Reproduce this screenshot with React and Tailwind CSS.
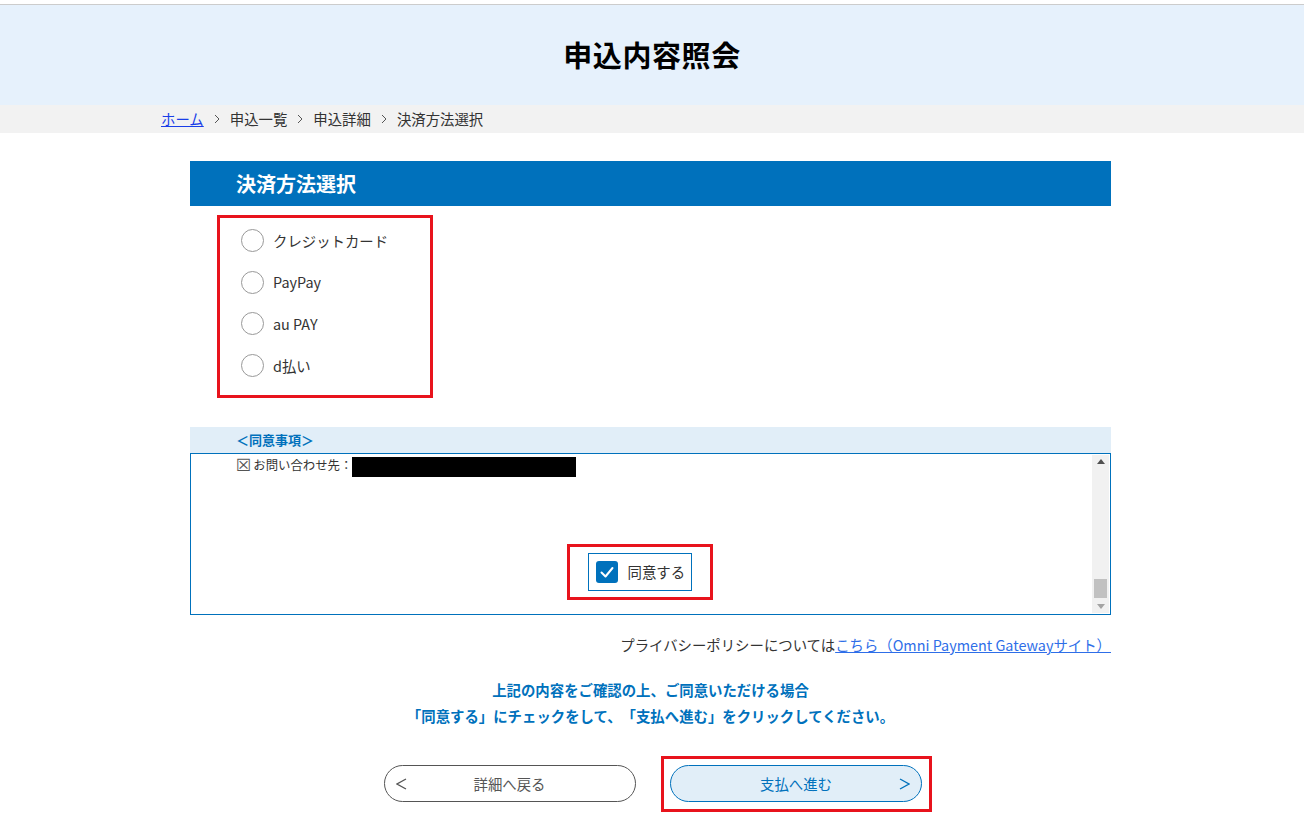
import React, { useState } from 'react';

const FONT = { fontFamily: '"Noto Sans CJK JP", "Noto Sans", sans-serif' };

const methods = ['クレジットカード', 'PayPay', 'au PAY', 'd払い'];

const Chevron = () => (
  <svg width="6" height="10" viewBox="0 0 6 10">
    <path d="M1 1 L5 5 L1 9" stroke="#555" strokeWidth="1" fill="none" />
  </svg>
);

const App = () => {
  const [method, setMethod] = useState(null);
  const [agreed, setAgreed] = useState(true);

  return (
    <div className="min-h-[816px] bg-white pt-1 text-[#333] [text-spacing-trim:space-all]" style={FONT}>
      {/* Page title */}
      <div className="border-t border-[#cccccc] bg-[#e6f1fc] h-[101px] flex items-center justify-center">
        <h1 className="text-[29px] font-bold text-black tracking-[0.02em]">申込内容照会</h1>
      </div>

      {/* Breadcrumb */}
      <div className="bg-[#f2f2f2] h-[28px]">
        <div className="w-[982px] mx-auto flex items-center h-full text-[14.4px] text-[#333] gap-[10px]">
          <a href="#" className="text-[#1a3ee8] underline">ホーム</a>
          <Chevron />
          <span>申込一覧</span>
          <Chevron />
          <span>申込詳細</span>
          <Chevron />
          <span>決済方法選択</span>
        </div>
      </div>

      <div className="w-[921px] ml-[190px] pt-[28px]">
        {/* Section header */}
        <div className="bg-[#0071bc] h-[45px] flex items-center pl-[46px]">
          <h2 className="text-white text-[20px] font-bold">決済方法選択</h2>
        </div>

        {/* Payment methods */}
        <div className="pt-[9px] pl-[27px]">
          <div className="w-[216px] h-[183px] border-[3px] border-[#e8131c] pl-[21px] pt-[11px] flex flex-col gap-[18.7px]">
            {methods.map(m => (
              <label key={m} className="flex items-center gap-[9px] cursor-pointer h-[23px]">
                <span
                  onClick={() => setMethod(m)}
                  className="w-[23px] h-[23px] rounded-full border border-[#999] bg-white flex items-center justify-center"
                >
                  {method === m && <span className="w-[11px] h-[11px] rounded-full bg-[#0071bc]" />}
                </span>
                <span className="text-[14.4px] text-[#333]">{m}</span>
              </label>
            ))}
          </div>
        </div>

        {/* Consent */}
        <div className="mt-[29px]">
          <div className="bg-[#e1eef8] h-[26px] flex items-center pl-[46px]">
            <span className="text-[13px] font-bold text-[#0071bc]">＜同意事項＞</span>
          </div>
          <div className="border border-[#0071bc] h-[162px] flex">
            <div className="flex-1 flex flex-col">
              <div className="pl-[45px] pt-[3px] flex items-start text-[12.4px] text-[#333] leading-[20px]">
                <span className="mr-[2px] text-[17px] leading-[16px] text-[#555]" style={{ fontFamily: '"DejaVu Sans", sans-serif' }}>☒</span>
                <span className="leading-[16px]">お問い合わせ先：</span>
                <span className="inline-block bg-black w-[224px] h-[20px]" />
              </div>
              <div className="flex-1 flex items-end justify-center pb-[14px] pr-[4px]">
                <div className="border-[3px] border-[#e8131c] w-[146px] h-[56px] flex items-center justify-center">
                  <label
                    onClick={() => setAgreed(!agreed)}
                    className="border border-[#0071bc] w-[104px] h-[38px] flex items-center gap-[10px] pl-[7px] cursor-pointer"
                  >
                    <span className={`w-[22px] h-[22px] rounded-[3px] flex items-center justify-center ${agreed ? 'bg-[#0071bc]' : 'bg-white border border-[#999]'}`}>
                      {agreed && (
                        <svg width="16" height="16" viewBox="0 0 16 16" fill="none">
                          <path d="M2.5 8.5 L6.5 12.5 L13.5 4" stroke="white" strokeWidth="2" strokeLinecap="round" strokeLinejoin="round" />
                        </svg>
                      )}
                    </span>
                    <span className="text-[14.4px] text-[#333]">同意する</span>
                  </label>
                </div>
              </div>
            </div>
            {/* scrollbar */}
            <div className="w-[17px] bg-[#f1f1f1] mr-[1px] my-[1px] flex flex-col items-center justify-between py-[4px]">
              <svg width="8" height="5" viewBox="0 0 8 5"><path d="M0 5 L4 0 L8 5 Z" fill="#505050" /></svg>
              <div className="flex flex-col items-center gap-[6px]">
                <div className="w-[13px] h-[19px] bg-[#c1c1c1]" />
                <svg width="8" height="5" viewBox="0 0 8 5"><path d="M0 0 L4 5 L8 0 Z" fill="#a3a3a3" /></svg>
              </div>
            </div>
          </div>
        </div>

        {/* Privacy */}
        <div className="mt-[19px] text-right text-[14.4px] text-[#333]">
          プライバシーポリシーについては
          <a href="#" className="text-[#2e6ee8] underline">こちら（Omni Payment Gatewayサイト）</a>
        </div>

        {/* Instruction */}
        <div className="mt-[21px] text-center text-[14.4px] font-bold text-[#0071bc] leading-[26px]">
          <p>上記の内容をご確認の上、ご同意いただける場合</p>
          <p>「同意する」にチェックをして、「支払へ進む」をクリックしてください。</p>
        </div>

        {/* Buttons */}
        <div className="mt-[27px] flex justify-center items-center gap-[25px] pl-[14px]">
          <button className="relative w-[252px] h-[37px] rounded-full border border-[#555] bg-white text-[14.4px] text-[#555] flex items-center justify-center">
            <svg width="11" height="12" viewBox="0 0 11 12" className="absolute left-[11px]">
              <path d="M10 1 L1 6 L10 11" stroke="#555" strokeWidth="1.3" fill="none" />
            </svg>
            詳細へ戻る
          </button>
          <div className="border-[3px] border-[#e8131c] w-[271px] h-[56px] flex items-center justify-center">
            <button className="relative w-[252px] h-[37px] rounded-full border border-[#0071bc] bg-[#e1eef8] text-[14.4px] text-[#0071bc] flex items-center justify-center">
              支払へ進む
              <svg width="11" height="12" viewBox="0 0 11 12" className="absolute right-[11px]">
                <path d="M1 1 L10 6 L1 11" stroke="#0071bc" strokeWidth="1.3" fill="none" />
              </svg>
            </button>
          </div>
        </div>
      </div>
    </div>
  );
};

export default App;
